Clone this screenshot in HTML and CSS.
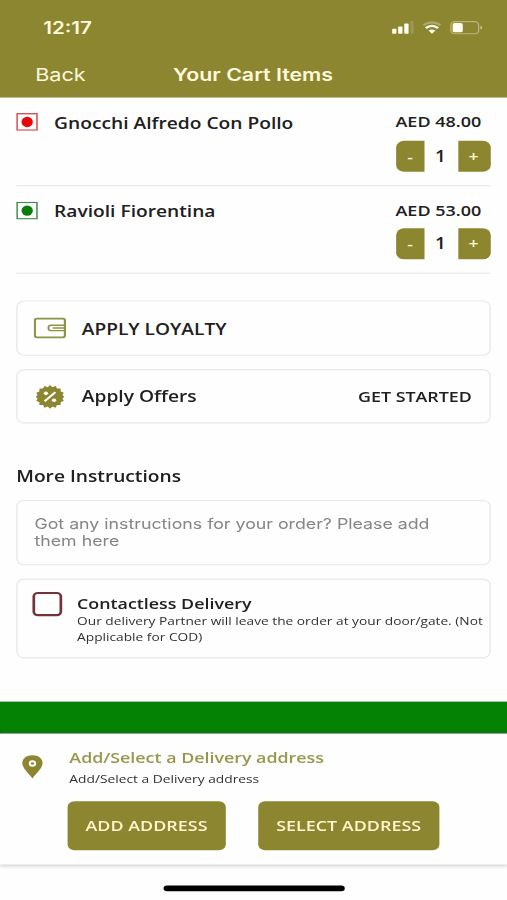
FILE: index.html
```html
<!DOCTYPE html>
<html lang="en">
<head>
<meta charset="utf-8">
<title>Your Cart Items</title>
<link rel="stylesheet" href="styles.css">
</head>
<body>
<div class="screen">
  <header class="header">
    <div class="status">
      <span class="time">12:17</span>
      <svg class="status-icons" width="68" height="14" viewBox="0 0 68 14">
        <g fill="#fffdf0">
          <rect x="0" y="7" width="3.2" height="4.4" rx=".6"/>
          <rect x="4.5" y="5" width="3.2" height="6.4" rx=".6"/>
          <rect x="9" y="2.3" width="3.2" height="9.1" rx=".6"/>
          <rect x="13.5" y="0" width="2.5" height="11.4" rx=".6" opacity=".15"/>
        </g>
        <g fill="none" stroke="#fffdf0" stroke-width="2">
          <path d="M23.2 3.6Q29.5-1.4 35.8 3.6" opacity=".3"/>
          <path d="M25 6.4Q29.5 2.4 34 6.4"/>
        </g>
        <path d="M26.9 8.5Q29.5 6.6 32.1 8.5L29.5 11.5z" fill="#fffdf0"/>
        <rect x="43.5" y=".5" width="20.5" height="11" rx="3" fill="none" stroke="#fffdf0" opacity=".4"/>
        <rect x="44.8" y="1.8" width="7.5" height="8.4" rx="1.5" fill="#fffdf0"/>
        <path d="M65.3 4.2v3.5q1.4-.5 1.4-1.75T65.3 4.2" fill="#fffdf0" opacity=".5"/>
      </svg>
    </div>
    <div class="nav">
      <span class="back">Back</span>
      <h1 class="title">Your Cart Items</h1>
    </div>
  </header>

  <main class="content">
    <section class="item">
      <svg class="mark" width="16" height="16" viewBox="0 0 16 16"><rect x=".6" y=".6" width="14.8" height="14.8" fill="#fff" stroke="#d44a50" stroke-width="1.2"/><ellipse cx="8.1" cy="8" rx="4.2" ry="4.7" fill="#e90808"/></svg>
      <span class="name">Gnocchi Alfredo Con Pollo</span>
      <div class="side">
        <span class="price">AED 48.00</span>
        <div class="stepper"><span class="minus">-</span><span class="count">1</span><span class="plus">+</span></div>
      </div>
    </section>
    <section class="item">
      <svg class="mark" width="16" height="16" viewBox="0 0 16 16"><rect x=".6" y=".6" width="14.8" height="14.8" fill="#fff" stroke="#43894a" stroke-width="1.2"/><ellipse cx="8.1" cy="8" rx="4.2" ry="4.7" fill="#087d08"/></svg>
      <span class="name">Ravioli Fiorentina</span>
      <div class="side">
        <span class="price">AED 53.00</span>
        <div class="stepper"><span class="minus">-</span><span class="count">1</span><span class="plus">+</span></div>
      </div>
    </section>

    <section class="card loyalty">
      <svg class="card-icon" width="24" height="20" viewBox="0 0 24 20" fill="none" stroke="#8c9442" stroke-width="1.6">
        <rect x=".8" y="1.5" width="22.2" height="16.8" rx="1.5"/>
        <path d="M23 7.5H12.8a2 2.4 0 0 0 0 4.8H23M14 9.9h9" stroke-width="1.3"/>
      </svg>
      <span class="label wide">APPLY LOYALTY</span>
    </section>
    <section class="card offers">
      <svg class="card-icon" width="24" height="22" viewBox="0 0 24 22">
        <path fill="#8b862f" d="M12 .3L13.7 2.3L16.1 1.2L17.2 3.6L19.8 3.5L19.9 6.2L22.2 7.4L21.2 9.3L22.5 11L21.2 12.7L22.2 14.6L19.9 15.8L19.8 18.5L17.2 18.4L16.1 20.8L13.7 19.7L12 21.7L10.3 19.7L7.9 20.8L6.8 18.4L4.2 18.5L4.1 15.8L1.8 14.6L2.8 12.7L1.5 11L2.8 9.3L1.8 7.4L4.1 6.2L4.2 3.5L6.8 3.6L7.9 1.2L10.3 2.3z"/>
        <path d="M8 15l8-8.2" stroke="#fff" stroke-width="1.7"/>
        <circle cx="9" cy="7.9" r="1.6" fill="#fff"/><circle cx="15" cy="14.1" r="1.6" fill="#fff"/>
      </svg>
      <span class="label">Apply Offers</span>
      <span class="action">GET STARTED</span>
    </section>

    <h2 class="heading">More Instructions</h2>
    <div class="card note">Got any instructions for your order? Please add<br>them here</div>
    <section class="card contactless">
      <span class="checkbox"></span>
      <div class="contactless-text">
        <span class="contactless-title">Contactless Delivery</span>
        <p class="contactless-desc">Our delivery Partner will leave the order at your door/gate. (Not<br>Applicable for COD)</p>
      </div>
    </section>
  </main>

  <div class="strip"></div>
  <footer class="address">
    <svg class="pin" width="16" height="22" viewBox="0 0 16 22"><path fill="#8b862f" fill-rule="evenodd" d="M8 .5C3.5.5.5 3.6.5 7.7.5 12 5 16.5 8 21.3c3-4.8 7.5-9.3 7.5-13.6C15.5 3.6 12.5.5 8 .5zM8 4.8a2.7 3 0 1 1 0 6 2.7 3 0 0 1 0-6z"/><circle cx="8" cy="7.8" r="1.1" fill="#8b862f"/></svg>
    <div class="address-body">
      <span class="address-title">Add/Select a Delivery address</span>
      <span class="address-sub">Add/Select a Delivery address</span>
      <div class="buttons">
        <span class="button add">ADD ADDRESS</span>
        <span class="button select">SELECT ADDRESS</span>
      </div>
    </div>
  </footer>
  <div class="home"><span class="home-bar"></span></div>
</div>
</body>
</html>
```
FILE: styles.css
```css
* { box-sizing: border-box; margin: 0; }
html, body { width: 507px; height: 900px; overflow: hidden; background: #fefefe; }

/* 375 x 812 point layout fitted to the viewport */
.screen {
  width: 375px;
  height: 812px;
  display: flex;
  flex-direction: column;
  transform: scale(1.352, 1.1084);
  transform-origin: 0 0;
  font-family: "Open Sans", sans-serif;
  color: #202020;
  background: #fefefe;
  white-space: nowrap;
}

.header { height: 88px; background: #8b862f; color: #fff9dc; font-family: Inter, sans-serif; }
.status { height: 44px; padding: 7px 17px 0 32px; display: flex; align-items: center; justify-content: space-between; }
.time { font-size: 15.2px; font-weight: 600; line-height: 20px; }
.status-icons { margin-top: 1px; }
.nav { height: 44px; padding: 2px 0 0 26px; display: grid; grid-template-columns: 102px 1fr; align-items: center; }
.back { font-size: 16px; }
.title { font-size: 15.8px; font-weight: 600; }

.content { height: 545px; padding: 0 12px; }
.item { height: 79.5px; border-bottom: 1px solid #e8e8e8; display: flex; align-items: flex-start; padding-top: 13px; }
.mark { margin-top: 1px; }
.name { margin-left: 12px; font-size: 14.2px; font-weight: 600; line-height: 20px; flex: 1; }
.side { width: 70.5px; margin-top: -1px; }
.price { display: block; font-size: 13.3px; font-weight: 600; line-height: 20px; }
.stepper { margin-top: 6.5px; height: 28px; display: grid; grid-template-columns: 21.5px 1fr 24.5px; line-height: 28px; text-align: center; font-size: 14px; font-weight: 600; }
.minus, .plus { background: #8b862f; color: #fff9dc; font-size: 13px; }
.count { padding-right: 1px; }
.plus { padding-right: 1px; }
.minus { border-radius: 6px 0 0 6px; }
.plus { border-radius: 0 6px 6px 0; }

.card { width: 351px; border: 1px solid #e8e8e8; border-radius: 6px; display: flex; align-items: center; }
.loyalty { margin-top: 24px; height: 49.5px; padding: 1px 0 0 12px; }
.offers { margin-top: 12px; height: 49.5px; padding: 1px 13px 0 12px; }
.label { margin-left: 11.5px; font-size: 14.2px; font-weight: 600; }
.label.wide { font-size: 14.15px; }
.action { margin-left: auto; font-size: 13.2px; font-weight: 600; }

.heading { margin-top: 37.5px; font-size: 14.2px; font-weight: 600; line-height: 20px; }
.note { margin-top: 11.5px; height: 58.5px; padding: 0 0 1px 12.5px; color: #858585; font-family: Inter, sans-serif; font-size: 13.13px; line-height: 16px; }
.contactless { margin-top: 12px; height: 72.5px; padding: 11px 0 0 11px; align-items: flex-start; }
.checkbox { width: 22px; height: 22px; border: 2px solid #74333b; border-radius: 4px; }
.contactless-text { margin-left: 11px; }
.contactless-title { display: block; font-size: 13.2px; font-weight: 600; line-height: 20px; }
.contactless-desc { font-size: 10.17px; line-height: 14px; margin-top: -0.5px; color: #303030; }

.strip { height: 28.5px; background: linear-gradient(#048204 88%, #086008); }
.address { height: 118px; padding: 11.5px 0 0 16px; display: flex; align-items: flex-start; box-shadow: 0 1px 3px #ccc; background: #fefefe; }
.pin { margin-top: 7.5px; }
.address-body { margin-left: 19.3px; }
.address-title { display: block; font-size: 13.2px; font-weight: 600; line-height: 20px; color: #99974d; }
.address-sub { display: block; font-size: 10.2px; line-height: 19px; color: #303030; }
.buttons { display: flex; gap: 24.5px; margin: 10.5px 0 0 -1.2px; }
.button { height: 44.5px; border-radius: 5px; background: #8b862f; color: #fff4cb; font-size: 13.25px; font-weight: 600; line-height: 45px; text-align: center; }
.add { width: 116.5px; }
.select { width: 133.5px; }
.home { flex: 1; padding-top: 19px; display: flex; justify-content: center; }
.home-bar { width: 134px; height: 5px; border-radius: 3px; background: #000; }
```
